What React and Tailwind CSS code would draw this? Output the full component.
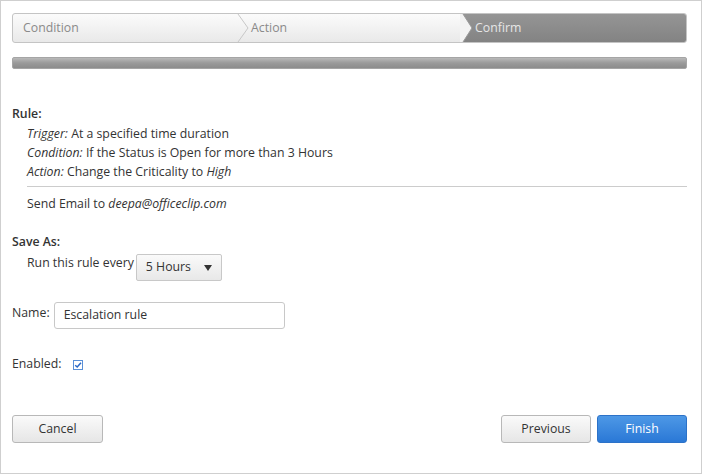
import React from "react";

export default function App() {
  return (
    <div className="w-[702px] h-[474px] bg-white border border-[#cfcfcf] text-[12.3px] text-[#333]" style={{ fontFamily: '"Open Sans", "Noto Sans", sans-serif' }}>
      <div className="pl-[11px] pr-[14px] pt-[12px]">
        {/* wizard */}
        <div className="relative flex h-[30px] rounded-[3px] border border-[#c4c4c4] overflow-hidden bg-gradient-to-b from-[#fbfbfb] to-[#e9e9e9]">
          <div className="w-[226px] flex items-center pl-[10px] text-[#8a8a8a]">Condition</div>
          <svg className="absolute left-[224px] top-0" width="14" height="28" viewBox="0 0 14 28">
            <path d="M1 0 L11 14 L1 28" fill="none" stroke="#c8c8c8" strokeWidth="1" />
          </svg>
          <div className="w-[221px] flex items-center pl-[12px] text-[#8a8a8a]">Action</div>
          <div className="relative flex-1 flex items-center pl-[15px] text-[#e6e6e6] bg-gradient-to-b from-[#959595] to-[#838383]">
            <svg className="absolute left-0 top-0" width="12" height="28" viewBox="0 0 12 28">
              <path d="M0 0 L3 0 L12 14 L3 28 L0 28 Z" fill="#f2f2f2" />
              <path d="M3 0 L12 14 L3 28" fill="none" stroke="#9a9a9a" strokeWidth="1" />
            </svg>
            Confirm
          </div>
        </div>
        {/* progress */}
        <div className="mt-[14px] h-[12px] rounded-[2px] bg-gradient-to-b from-[#b9b9b9] via-[#9a9a9a] to-[#8c8c8c] border border-[#a5a5a5]" />
      </div>

      <div className="pl-[11px] pr-[14px] mt-[35px]">
        <div className="font-semibold text-[#333] leading-[19px]">Rule:</div>
        <div className="pl-[15px] leading-[19px] mt-[1px]">
          <div><i>Trigger:</i> At a specified time duration</div>
          <div><i>Condition:</i> If the Status is Open for more than 3 Hours</div>
          <div><i>Action:</i> Change the Criticality to <i>High</i></div>
          <div className="border-t border-[#cccccc] mt-[5px] pt-[7px]">Send Email to <i>deepa@officeclip.com</i></div>
        </div>

        <div className="font-semibold mt-[19px] leading-[19px]">Save As:</div>
        <div className="pl-[15px] flex items-start mt-[1px]">
          <span className="leading-[19px] mt-[1px]">Run this rule every</span>
          <div className="ml-[2px] w-[86px] h-[27px] border border-[#c8c8c8] rounded-[2px] bg-gradient-to-b from-[#fafafa] to-[#e8e8e8] flex items-center pl-[9px] pr-[9px] mt-[2px]">
            <span className="flex-1">5 Hours</span>
            <svg width="8" height="6" viewBox="0 0 8 6"><path d="M0 0 L8 0 L4 6 Z" fill="#333" /></svg>
          </div>
        </div>

        <div className="flex items-start mt-[22px]">
          <span className="leading-[19px] text-[#333]">Name:</span>
          <div className="ml-[4px] w-[231px] h-[27px] border border-[#c8c8c8] rounded-[3px] flex items-center pl-[9px] mt-[-1px]">Escalation rule</div>
        </div>

        <div className="flex items-center mt-[25px]">
          <span className="leading-[19px]">Enabled:</span>
          <span className="ml-[11px] w-[10px] h-[10px] border border-[#5a8fd6] flex items-center justify-center mt-[3px]">
            <svg width="8" height="8" viewBox="0 0 8 8"><path d="M1.2 4.2 L3.2 6 L7 1.8" fill="none" stroke="#2a68c6" strokeWidth="1.5" /></svg>
          </span>
        </div>

        <div className="flex mt-[42px]">
          <button className="w-[91px] h-[28px] border border-[#b8b8b8] rounded-[3px] bg-gradient-to-b from-[#fafafa] to-[#e6e6e6] text-[#333]">Cancel</button>
          <div className="flex-1" />
          <button className="w-[90px] h-[28px] border border-[#b8b8b8] rounded-[3px] bg-gradient-to-b from-[#fafafa] to-[#e6e6e6] text-[#333]">Previous</button>
          <button className="ml-[6px] w-[90px] h-[28px] border border-[#2c72c8] rounded-[3px] bg-gradient-to-b from-[#4d98e6] to-[#2a78d6] text-white">Finish</button>
        </div>
      </div>
    </div>
  );
}
